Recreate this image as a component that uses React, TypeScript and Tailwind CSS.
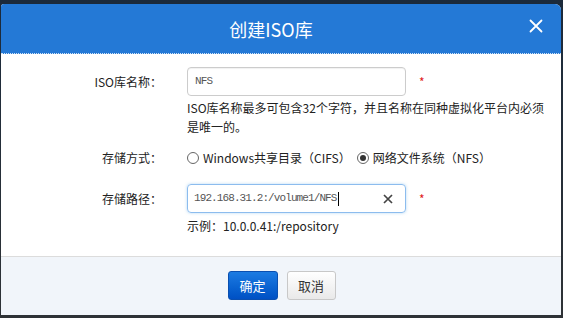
import React from "react";

const cjk = { fontFamily: '"Noto Sans CJK SC", "Noto Sans", sans-serif' };
const mono = { fontFamily: '"Liberation Mono", "DejaVu Sans Mono", monospace' };

function Radio({ checked, label }: { checked: boolean; label: string }) {
  return (
    <div className="flex items-center">
      <span className="flex h-[12px] w-[12px] items-center justify-center rounded-full border border-[#666] bg-white">
        {checked && <span className="h-[6px] w-[6px] rounded-full bg-[#333]" />}
      </span>
      <span className="ml-[4px] text-[12px] text-[#222]">{label}</span>
    </div>
  );
}

export default function App() {
  return (
    <div
      className="h-[318px] w-[563px] overflow-hidden bg-gradient-to-b from-[#1b2a3b] to-[#2e3236] pl-[1px] pt-[4px]"
      style={cjk}
    >
      <div className="flex h-[311px] w-[560px] flex-col overflow-hidden rounded-tl-[3px] rounded-tr-[6px] bg-white">
        {/* header */}
        <div className="relative flex h-[50px] shrink-0 items-center justify-center border-b border-dotted border-[#cfe3f7] bg-[#2479d6] pr-[20px]">
          <span className="text-[18px] leading-none text-white">创建ISO库</span>
          <svg
            className="absolute left-[528px] top-[15px]"
            width="14"
            height="14"
            viewBox="0 0 14 14"
          >
            <path d="M1.5 1.5 L12.5 12.5 M12.5 1.5 L1.5 12.5" stroke="white" strokeWidth="1.8" strokeLinecap="round" />
          </svg>
        </div>

        {/* body */}
        <div className="h-[202px] shrink-0 pt-[13px]">
          <div className="flex items-center">
            <div className="w-[161px] text-right text-[12px] text-[#222]">ISO库名称：</div>
            <div
              className="ml-[25px] flex h-[29px] w-[219px] items-center rounded-[4px] border border-[#ccc] px-[7px] text-[11px] tracking-[-0.9px] text-[#555] shadow-[inset_0_1px_1px_rgba(0,0,0,0.06)]"
              style={mono}
            >
              NFS
            </div>
            <span className="ml-[13px] text-[12px] text-[#e02020]">*</span>
          </div>
          <div className="ml-[186px] mt-[2px] w-[360px] text-[12px] leading-[19px] text-[#222]">
            ISO库名称最多可包含32个字符，并且名称在同种虚拟化平台内必须是唯一的。
          </div>

          <div className="mt-[12px] flex h-[20px] items-center">
            <div className="w-[161px] text-right text-[12px] text-[#222]">存储方式：</div>
            <div className="ml-[25px] flex items-center gap-[6px]">
              <Radio checked={false} label="Windows共享目录（CIFS）" />
              <Radio checked={true} label="网络文件系统（NFS）" />
            </div>
          </div>

          <div className="mt-[16px] flex items-center">
            <div className="w-[161px] text-right text-[12px] text-[#222]">存储路径：</div>
            <div className="ml-[25px] flex h-[29px] w-[219px] items-center rounded-[4px] border border-[#8cbcee] pl-[6px] pr-[12px] shadow-[0_0_3px_rgba(102,175,233,0.5)]">
              <span className="text-[11px] tracking-[-0.9px] text-[#555]" style={mono}>
                192.168.31.2:/volume1/NFS
              </span>
              <span className="ml-[1px] h-[14px] w-[1px] bg-black" />
              <span className="flex-1" />
              <svg width="10" height="10" viewBox="0 0 10 10">
                <path d="M1 1 L9 9 M9 1 L1 9" stroke="#444" strokeWidth="1.7" />
              </svg>
            </div>
            <span className="ml-[13px] text-[12px] text-[#e02020]">*</span>
          </div>
          <div className="ml-[186px] mt-[3px] text-[12px] leading-[20px] text-[#222]">
            示例：10.0.0.41:/repository
          </div>
        </div>

        {/* footer */}
        <div className="flex flex-1 items-start justify-center gap-[9px] border-t border-[#dcdcdc] bg-[#f1f5fa] pl-[1px] pt-[14px]">
          <button className="h-[29px] w-[50px] rounded-[3px] border border-[#0a4fb0] bg-gradient-to-b from-[#1c7be2] to-[#0050c4] text-[13px] text-white">
            确定
          </button>
          <button className="h-[29px] w-[49px] rounded-[3px] border border-[#c8c8c8] bg-gradient-to-b from-[#ffffff] to-[#e9e9e9] text-[13px] text-[#333]">
            取消
          </button>
        </div>
      </div>
    </div>
  );
}
